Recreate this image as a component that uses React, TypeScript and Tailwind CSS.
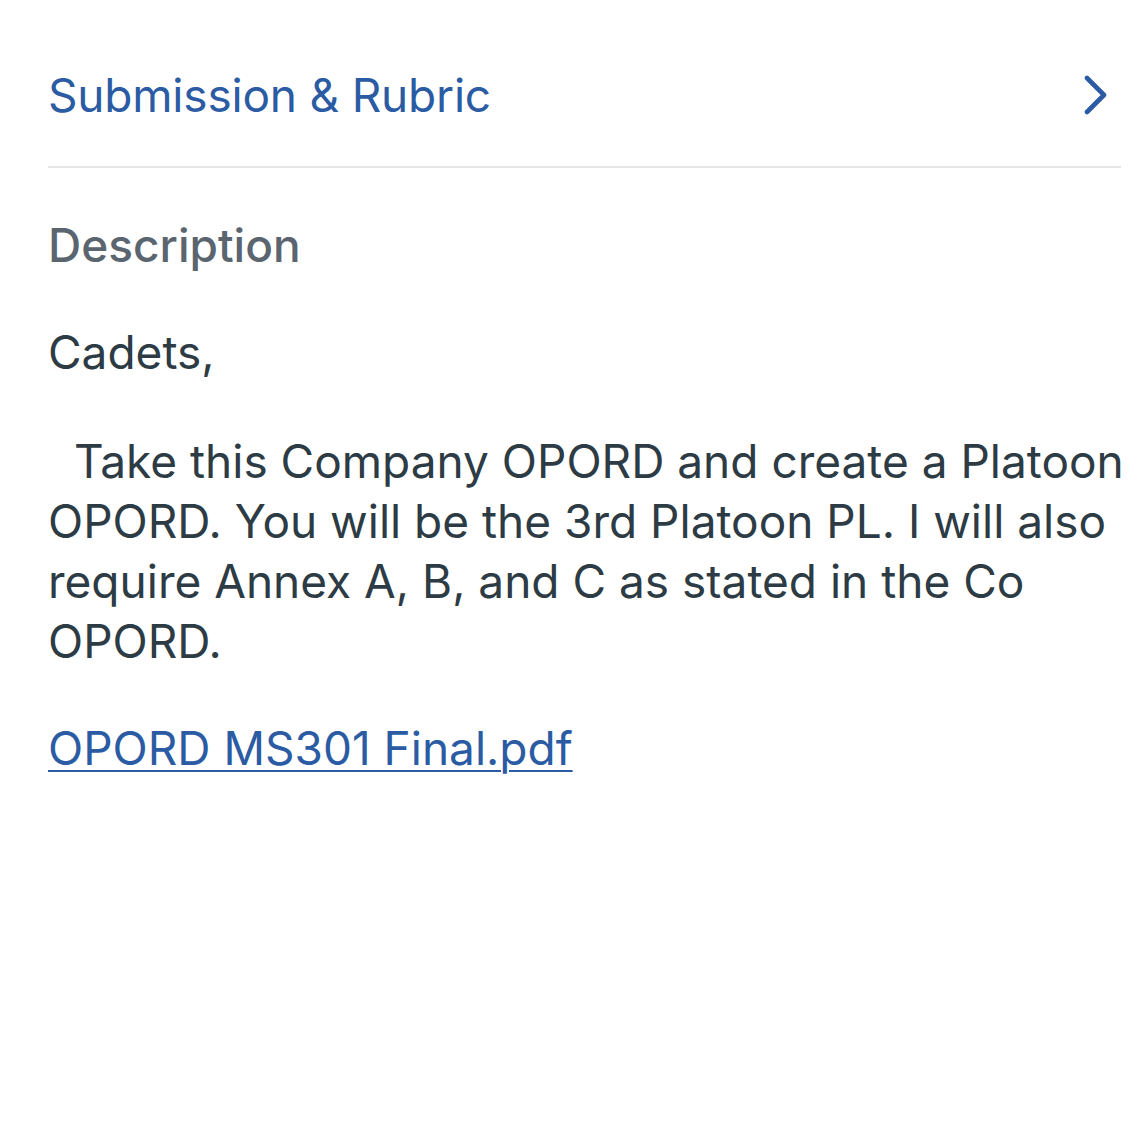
const BODY = [
  "\u00a0\u00a0Take this Company OPORD and create a Platoon",
  "OPORD. You will be the 3rd Platoon PL. I will also",
  "require Annex A, B, and C as stated in the Co",
  "OPORD.",
];

function Chevron() {
  return (
    <svg width="26" height="40" viewBox="0 0 26 40" className="mr-[12px] text-[#2b5ba3]" aria-hidden>
      <polyline points="4,3 21,20 4,37" fill="none" stroke="currentColor" strokeWidth="4.6" strokeLinecap="round" strokeLinejoin="round" />
    </svg>
  );
}

export default function App() {
  return (
    <div className="min-h-[1135px] w-[1141px] bg-white pl-[48px] pr-[20px] font-['Inter','Liberation_Sans',sans-serif] text-[46px] leading-[60px]">
      <div className="flex items-center justify-between border-b-2 border-[#e4e5e7] pt-[65px] pb-[41px]">
        <span className="tracking-[-0.2px] text-[#2b5ba3]">Submission &amp; Rubric</span>
        <Chevron />
      </div>
      <div className="pt-[47px] font-medium text-[#5b6570]">Description</div>
      <div className="pt-[47px] text-[#2d3b45]">Cadets,</div>
      <div className="pt-[49px] text-[#2d3b45]">
        {BODY.map((l) => (
          <div key={l} className="whitespace-pre">{l}</div>
        ))}
      </div>
      <div className="pt-[47px]">
        <a href="#" className="text-[#2b5ba3] underline decoration-2 underline-offset-[5px]">OPORD MS301 Final.pdf</a>
      </div>
    </div>
  );
}
